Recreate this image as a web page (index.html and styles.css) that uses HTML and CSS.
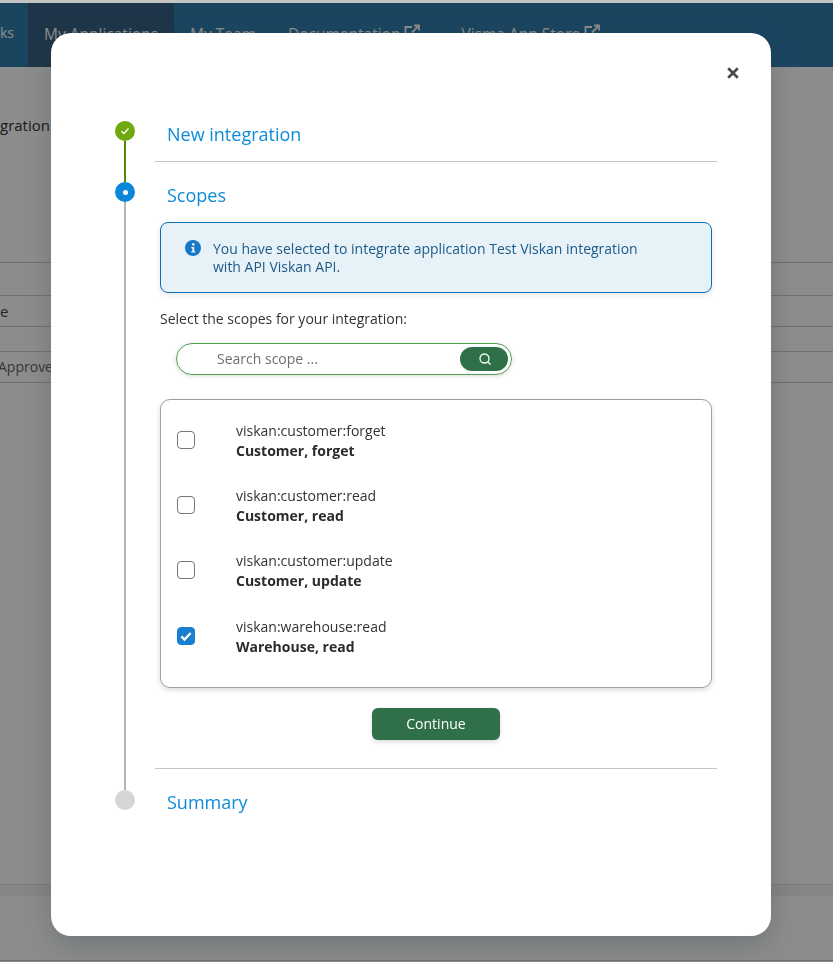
FILE: index.html
```html
<!DOCTYPE html>
<html lang="en">
<head>
    <meta charset="UTF-8">
    <meta name="viewport" content="width=device-width, initial-scale=1.0">
    <title>New integration</title>
    <link rel="stylesheet" href="styles.css">
</head>
<body>

    <!-- Page behind the dialog -->
    <div class="page">
        <nav class="topnav">
            <a class="nav-item nav-first">ks</a>
            <a class="nav-item nav-active">My Applications</a>
            <a class="nav-item">My Team</a>
            <a class="nav-item">Documentation
                <svg class="ext-icon" viewBox="0 0 16 16"><path d="M8 3H1.500v11.500H13V9M10 1.500h5v5M15 1.500L8 8.500"/></svg>
            </a>
            <a class="nav-item">Visma App Store
                <svg class="ext-icon" viewBox="0 0 16 16"><path d="M8 3H1.500v11.500H13V9M10 1.500h5v5M15 1.500L8 8.500"/></svg>
            </a>
        </nav>
        <div class="page-title">gration</div>
        <div class="page-table">
            <div class="page-cell page-cell-first"><span class="cell-text">e</span></div>
            <div class="page-cell"><span class="cell-text cell-approved">Approved</span></div>
        </div>
        <div class="page-footer"><div class="page-footer-band"></div></div>
    </div>
    <div class="overlay"></div>

    <!-- Dialog -->
    <div class="modal">
        <button class="modal-close" aria-label="Close">
            <svg viewBox="0 0 10 10"><path d="M1 1l8 8M9 1l-8 8"/></svg>
        </button>

        <div class="step step-done">
            <div class="rail">
                <span class="marker marker-done">
                    <svg viewBox="0 0 10 10"><path d="M1.500 5.200l2.400 2.300 4.600-5"/></svg>
                </span>
                <span class="rail-line rail-green"></span>
            </div>
            <div class="step-body step-body-first">
                <h3 class="step-title">New integration</h3>
            </div>
        </div>

        <div class="step step-current">
            <div class="rail">
                <span class="marker marker-current"><span class="marker-dot"></span></span>
                <span class="rail-line"></span>
            </div>
            <div class="step-body step-body-current">
                <h3 class="step-title">Scopes</h3>

                <div class="alert">
                    <svg class="alert-icon" viewBox="0 0 16 16">
                        <circle cx="8" cy="8" r="8"/>
                        <circle class="alert-i" cx="8.300" cy="4.400" r="1.300"/>
                        <path class="alert-i" d="M6.400 7h2.900v4.200h1v1.300H6.300v-1.300h1V8.300H6.400z"/>
                    </svg>
                    <p class="alert-text">You have selected to integrate application Test Viskan integration<br>with API Viskan API.</p>
                </div>

                <p class="scope-label">Select the scopes for your integration:</p>

                <div class="search">
                    <input class="search-input" type="text" placeholder="Search scope ...">
                    <button class="search-btn" aria-label="Search">
                        <svg viewBox="0 0 14 14"><circle cx="6.500" cy="6.500" r="4.500"/><path d="M10 10l2.500 2.500"/></svg>
                    </button>
                </div>

                <div class="scope-list">
                    <label class="scope-row">
                        <span class="check"></span>
                        <span class="scope-text"><span class="scope-key">viskan:customer:forget</span><b class="scope-name">Customer, forget</b></span>
                    </label>
                    <label class="scope-row">
                        <span class="check"></span>
                        <span class="scope-text"><span class="scope-key">viskan:customer:read</span><b class="scope-name">Customer, read</b></span>
                    </label>
                    <label class="scope-row">
                        <span class="check"></span>
                        <span class="scope-text"><span class="scope-key">viskan:customer:update</span><b class="scope-name">Customer, update</b></span>
                    </label>
                    <label class="scope-row">
                        <span class="check check-on">
                            <svg viewBox="0 0 12 12"><path d="M2 6.300l2.700 2.700L10 3.400"/></svg>
                        </span>
                        <span class="scope-text"><span class="scope-key">viskan:warehouse:read</span><b class="scope-name">Warehouse, read</b></span>
                    </label>
                </div>

                <div class="actions">
                    <button class="btn-continue">Continue</button>
                </div>
            </div>
        </div>

        <div class="step step-last">
            <div class="rail">
                <span class="marker marker-todo"></span>
            </div>
            <div class="step-body">
                <h3 class="step-title">Summary</h3>
            </div>
        </div>
    </div>

</body>
</html>
```

FILE: styles.css
```css
* { box-sizing: border-box; }
html, body { height: 100%; }
body { margin: 0; font-family: "Open Sans", Arial, sans-serif; color: #2b2b2b; background: #fff; overflow: hidden; }

/* page behind the dialog */
.page { height: 962px; display: flex; flex-direction: column; border-top: 3px solid #c4c4c4; }
.topnav { height: 64px; flex: none; display: flex; background: #317eae; overflow: hidden; font-size: 15.500px; color: #fff; }
.nav-item { padding: 20px 16px 0; white-space: nowrap; }
.nav-first { padding: 20px 0 0; width: 28px; font-size: 14px; }
.nav-active { background: #386083; }
.ext-icon { width: 16px; height: 16px; margin-right: 9px; fill: none; stroke: #fff; stroke-width: 1.800; }
.page-title { height: 196px; padding-top: 48px; font-size: 15px; color: #333; flex: none; border-bottom: 1px solid #ccc; }
.page-table { flex: none; padding-top: 32px; }
.page-cell { height: 32px; border-bottom: 1px solid #ccc; border-top: 1px solid #ccc; margin-bottom: 24px; font-size: 14px; color: #666; line-height: 30px; white-space: nowrap; overflow: hidden; }
.page-cell-first { font-size: 15px; color: #444; }
.page-cell + .page-cell { margin-bottom: 0; }
.cell-approved { display: inline-block; margin-left: -2px; }
.page-footer { margin-top: 501px; height: 77px; border-top: 1px solid #ddd; border-bottom: 1px solid #ccc; }
.page-footer-band { height: 11px; background: #f2f2f2; }
.overlay { position: fixed; inset: 3px 0 0; background: rgba(0, 0, 0, .45); }

/* dialog */
.modal { position: fixed; left: 51px; top: 33px; width: 720px; height: 903px; background: #fff; border-radius: 20px; padding: 88px 54px 0 64px; box-shadow: 0 10px 30px rgba(30, 50, 60, .25); }
.modal-close { position: absolute; top: 34px; right: 32px; width: 12px; height: 12px; padding: 0; border: 0; background: none; cursor: pointer; }
.modal-close svg { display: block; width: 12px; height: 12px; fill: none; stroke: #494949; stroke-width: 2.200; }

.step { display: flex; gap: 20px; }
.rail { width: 20px; flex: none; display: flex; flex-direction: column; align-items: center; }
.rail-line { flex: 1; width: 2px; background: #b5b5b5; }
.rail-green { background: #4e8a08; }
.marker { width: 20px; height: 20px; flex: none; border-radius: 50%; display: flex; align-items: center; justify-content: center; }
.marker-done { background: #6ea90f; }
.marker-done svg { width: 10px; height: 10px; fill: none; stroke: #fff; stroke-width: 1.300; }
.marker-current { background: #0a87d8; }
.marker-dot { width: 5px; height: 5px; border-radius: 50%; background: #fff; }
.marker-todo { background: #d6d6d6; }

.step-body { flex: 1; min-width: 0; }
.step-body-first { height: 61px; }
.step-body-first .step-title { height: 42px; border-bottom: 1px solid #c4c4c4; }
.step-body-current { padding-bottom: 21px; }
.step-title { margin: -1px 0 0; padding-left: 12px; font-size: 18px; font-weight: 400; line-height: 28px; color: #0d8bd6; }
.step-current .step-title { margin-bottom: 13px; }
.step-last .step-title { margin-top: -2px; }

.alert { margin: 0 5px; height: 71px; padding: 17px 30px 0 24px; display: flex; gap: 12px; background: #e7f1f8; border: 1px solid #0a6fb4; border-radius: 8px; box-shadow: 0 2px 6px rgba(0, 0, 0, .1); }
.alert-icon { width: 16px; height: 16px; flex: none; fill: #1579c6; }
.alert-i { fill: #e7f1f8; }
.alert-text { margin: 0; font-size: 14px; line-height: 18px; color: #1c5a86; }

.scope-label { margin: 16px 5px 0; font-size: 14px; line-height: 20px; color: #333; }
.search { margin: 14px 0 0 21px; width: 336px; height: 32px; padding: 3px 3px 3px 40px; display: flex; align-items: center; border: 1px solid #4ea24e; border-radius: 16px; box-shadow: 0 1px 4px rgba(0, 0, 0, .15); }
.search-input { flex: 1; min-width: 0; height: 24px; border: 0; outline: 0; background: none; padding: 0 0 2px; font: inherit; font-size: 14px; color: #333; }
.search-input::placeholder { color: #6f6f6f; opacity: 1; }
.search-btn { width: 48px; height: 24px; padding: 0 0 0 1px; border: 0; border-radius: 12px; background: #2f7048; display: flex; align-items: center; justify-content: center; }
.search-btn svg { width: 14px; height: 14px; fill: none; stroke: #fff; stroke-width: 1.300; }

.scope-list { margin: 24px 5px 0; height: 289px; padding: 8px 16px; display: flex; flex-direction: column; border: 1px solid #a0a0a0; border-radius: 10px; box-shadow: 0 2px 5px rgba(0, 0, 0, .15); }
.scope-row { height: 65.330px; flex: none; display: flex; align-items: center; gap: 41px; }
.check { width: 18px; height: 18px; flex: none; margin-bottom: 2px; border: 1px solid #767676; border-radius: 4px; background: #fff; }
.check-on { background: #1a7fd1; border-color: #1a7fd1; display: flex; align-items: center; justify-content: center; }
.check-on svg { width: 14px; height: 14px; fill: none; stroke: #fff; stroke-width: 2; }
.scope-text { display: flex; flex-direction: column; font-size: 14px; line-height: 20px; }
.scope-key { color: #333; }
.scope-name { color: #2b2b2b; font-weight: 700; }

.actions { display: flex; justify-content: center; margin-top: 20px; padding-bottom: 28px; border-bottom: 1px solid #c4c4c4; }
.btn-continue { width: 128px; height: 32px; padding: 0 0 2px; border: 0; border-radius: 6px; background: #2f7048; color: #fff; font: inherit; font-size: 14px; box-shadow: 0 2px 4px rgba(0, 0, 0, .15); }
```
